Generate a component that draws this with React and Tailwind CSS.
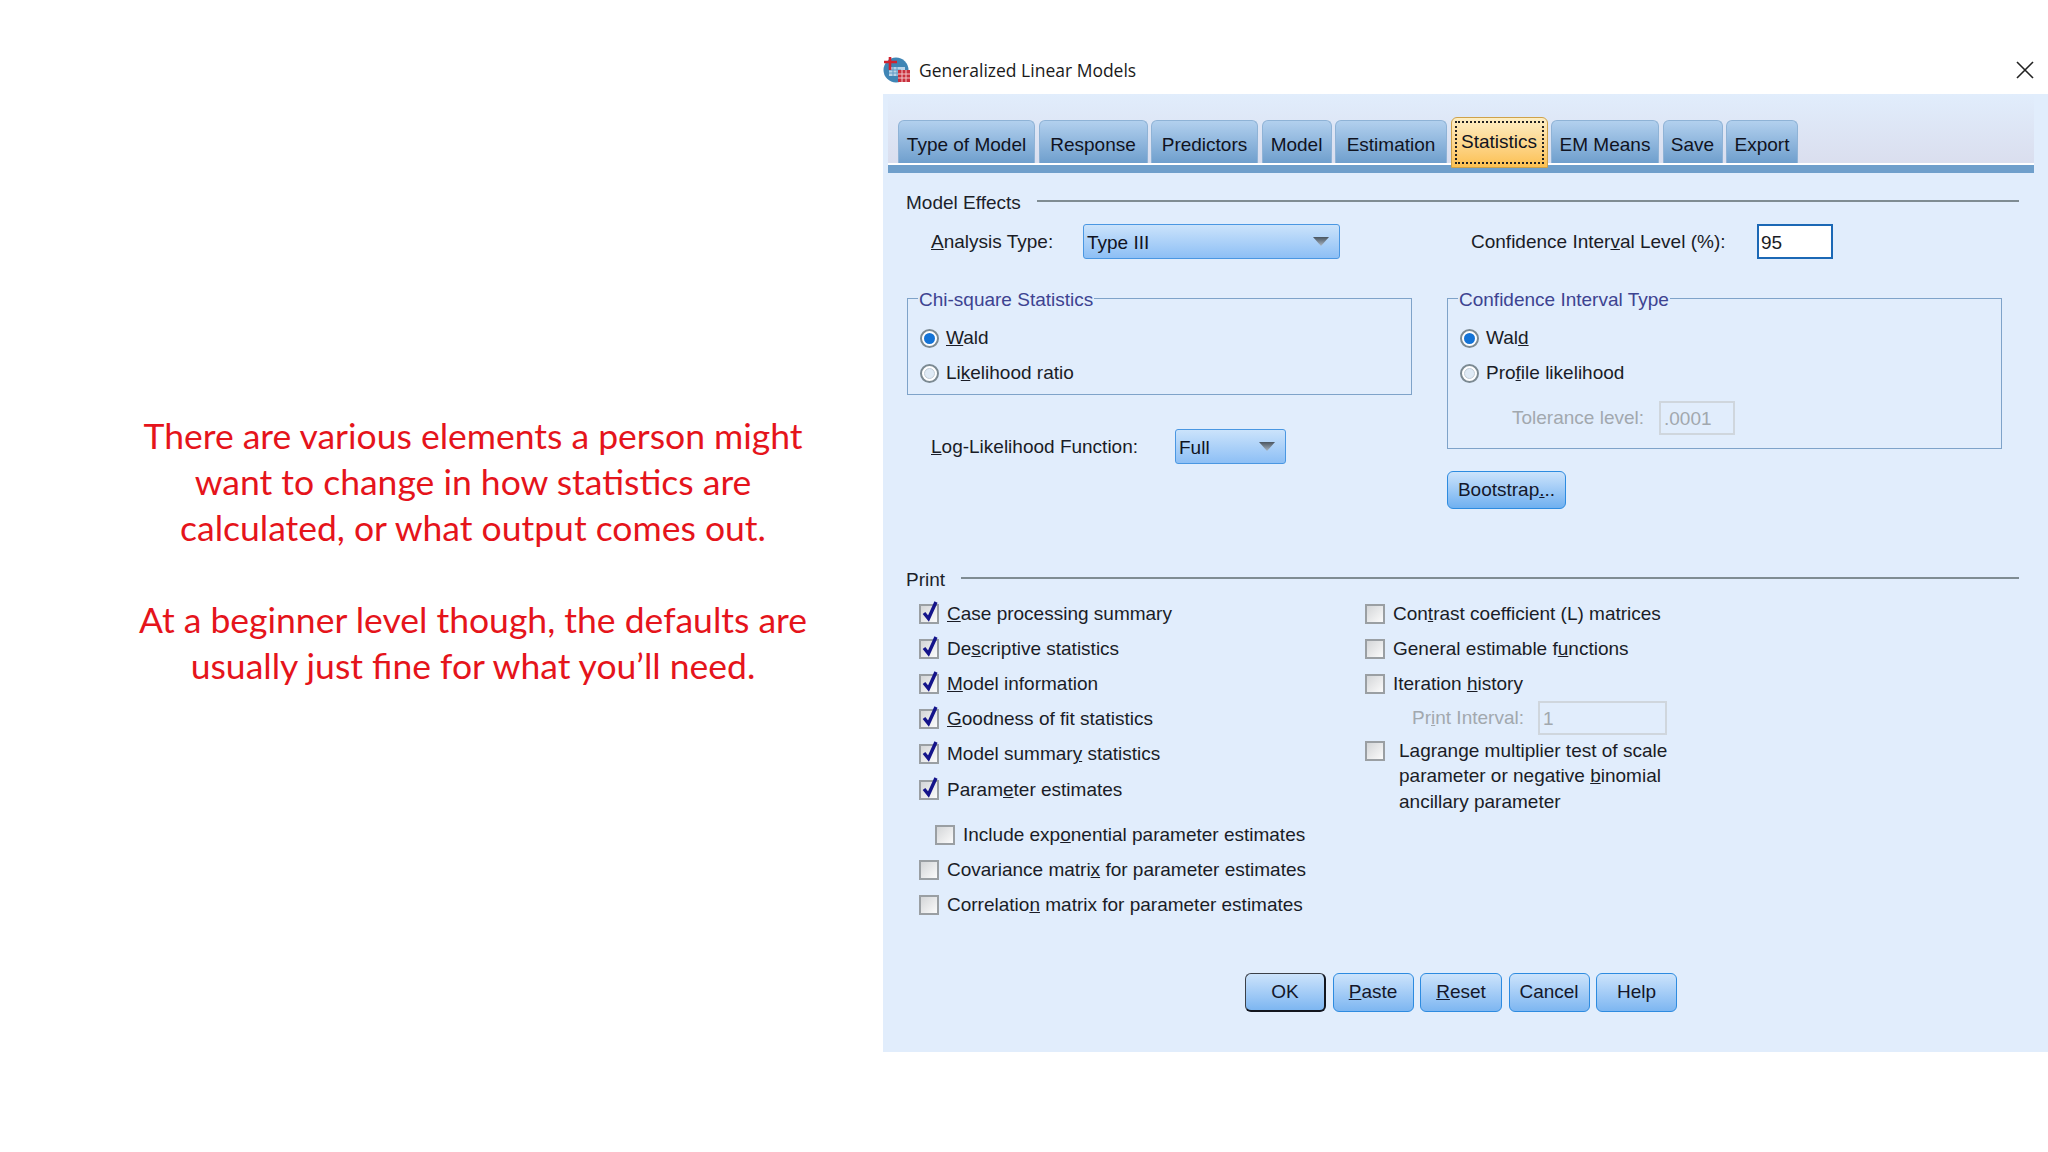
/* ── Generalized Linear Models dialog, with a slide note beside it ── */

const arial = { fontFamily: '"Liberation Sans", Arial, sans-serif' };

const tabs = [
  { name: 'Type of Model', w: 'w-[137px]' },
  { name: 'Response', w: 'w-[109px]' },
  { name: 'Predictors', w: 'w-[107px]' },
  { name: 'Model', w: 'w-[70px]' },
  { name: 'Estimation', w: 'w-[112px]' },
];
const tabsAfter = [
  { name: 'EM Means', w: 'w-[108px]' },
  { name: 'Save', w: 'w-[60px]' },
  { name: 'Export', w: 'w-[72px]' },
];

function Tab({ name, w }) {
  return (
    <div className={`${w} h-[43px] rounded-t-[6px] border border-b-0 border-[#8fb3d6] bg-gradient-to-b from-[#b2d0ee] to-[#6f9fcd] flex items-center justify-center pt-[5px] text-[#10131f]`}>
      {name}
    </div>
  );
}

function ActiveTab() {
  return (
    <div className="w-[97px] h-[51px] -mb-[5px] relative z-10 rounded-t-[6px] border border-[#cfa24a] bg-gradient-to-b from-[#fdeec4] to-[#fcc04f] p-[3px]">
      <div className="h-full border-2 border-dotted border-[#222] flex items-center justify-center pb-[2px] text-[#10131f]">
        Statistics
      </div>
    </div>
  );
}

function SectionHead({ label, className }) {
  return (
    <div className={`flex items-center ml-[23px] w-[1113px] h-[22px] ${className}`}>
      <span className="text-[#1c1f2a]">{label}</span>
      <div className="flex-1 h-[2px] bg-[#7f8c92] ml-[16px] -mt-[4px]" />
    </div>
  );
}

function Arrow() {
  return (
    <svg width="16" height="9" viewBox="0 0 16 9" className="-mt-[3px]">
      <defs>
        <linearGradient id="arrowFill" x1="0" y1="0" x2="0" y2="1">
          <stop offset="0" stopColor="#4a5560" />
          <stop offset="1" stopColor="#a9b6c4" />
        </linearGradient>
      </defs>
      <path d="M0 0H16L8 9Z" fill="url(#arrowFill)" />
    </svg>
  );
}

function Select({ value, w }) {
  return (
    <div className={`${w} h-[35px] rounded-[3px] border border-[#4a97e2] bg-gradient-to-b from-[#cbe3fb] to-[#8dbff5] flex items-center justify-between pl-[3px] pr-[10px] pt-[2px] text-[#10131f]`}>
      <span>{value}</span>
      <Arrow />
    </div>
  );
}

function Radio({ on }) {
  return (
    <div className="w-[19px] h-[19px] shrink-0 rounded-full border-2 border-[#7c8a92] bg-white flex items-center justify-center">
      <div className={`w-[11px] h-[11px] rounded-full ${on ? 'bg-[#1473d6]' : 'bg-[#dfeaf5] border border-[#c3ced8]'}`} />
    </div>
  );
}

function RadioRow({ on, gap, children, className }) {
  return (
    <div className={`flex items-center h-[24px] pl-[12px] ${gap} ${className}`}>
      <Radio on={on} />
      <span className="text-[#1a1c26]">{children}</span>
    </div>
  );
}

function Group({ title, className, children }) {
  return (
    <div className={`border border-[#7fa3c9] ${className}`}>
      <div className="w-fit -mt-[10px] ml-[10px] px-[1px] bg-[#e1edfc] h-[22px] leading-[22px] text-[#3d4391]">
        {title}
      </div>
      {children}
    </div>
  );
}

function Check({ on, className = '' }) {
  return (
    <div className={`relative w-[20px] h-[20px] shrink-0 border-2 border-[#9a9fa3] bg-gradient-to-br from-[#d4d6d8] to-[#fbfbfb] ${className}`}>
      {on && (
        <svg viewBox="0 0 20 24" className="absolute -top-[7px] -left-[1px] w-[20px] h-[24px]">
          <path d="M4 14L8.5 19.5L16 3" fill="none" stroke="#14148a" strokeWidth="3.4" />
        </svg>
      )}
    </div>
  );
}

function CheckRow({ on, className = '', children }) {
  return (
    <div className={`flex items-center gap-[8px] h-[35.2px] ${className}`}>
      <Check on={on} />
      <span className="text-[#1a1c26] whitespace-nowrap">{children}</span>
    </div>
  );
}

function Button({ w, dark, children }) {
  return (
    <div className={`${w} h-[39px] rounded-[6px] border bg-gradient-to-b from-[#cce3fb] to-[#7db6f1] flex items-center justify-center text-[#14172a] ${dark ? 'border-[#3b4048] border-r-[2px] border-b-[2px] border-r-[#12161f] border-b-[#12161f]' : 'border-[#2d8be0]'}`}>
      {children}
    </div>
  );
}

function DisabledBox({ value, w }) {
  return (
    <div className={`${w} h-[34px] border-2 border-[#cfd6dd] flex items-center pl-[3px] pt-[2px] text-[#a2a8ae]`}>
      {value}
    </div>
  );
}

function AppIcon() {
  return (
    <svg width="28" height="26" viewBox="0 0 28 26">
      <circle cx="13" cy="13" r="12.5" fill="#3f85b5" />
      <rect x="6" y="10" width="16" height="9" fill="#b9d3e8" />
      <path d="M6 13H18M6 16H18M10 10V19M14 10V19" stroke="#5f9ac4" strokeWidth="1" />
      <path d="M7 0V13M1 5H14" stroke="#d1232f" strokeWidth="2.6" />
      <rect x="15" y="13" width="12" height="12" fill="#c9303c" />
      <path d="M15 17H27M15 21H27M19 13V25M23 13V25" stroke="#f3c4c8" strokeWidth="1" />
    </svg>
  );
}

export default function App() {
  return (
    <div className="w-[2048px] h-[1152px] bg-white flex overflow-hidden">
      {/* ── Slide note ── */}
      <div
        className="w-[883px] shrink-0 pl-[63px] pt-[413px] text-center text-[#e5141b] text-[35.5px] leading-[46px]"
        style={{ fontFamily: 'Lato, sans-serif' }}
      >
        <p>There are various elements a person might</p>
        <p>want to change in how statistics are</p>
        <p>calculated, or what output comes out.</p>
        <p className="mt-[46px]">At a beginner level though, the defaults are</p>
        <p>usually just fine for what you’ll need.</p>
      </div>

      {/* ── Dialog ── */}
      <div className="flex-1 pt-[46px]">
        <div className="h-[48px] flex items-center pr-[14px]">
          <AppIcon />
          <span
            className="ml-[8px] flex-1 text-[17.5px] text-[#1a1a1a]"
            style={{ fontFamily: '"Open Sans", sans-serif' }}
          >
            Generalized Linear Models
          </span>
          <svg width="18" height="18" viewBox="0 0 18 18">
            <path d="M1 1L17 17M17 1L1 17" stroke="#222" strokeWidth="1.6" />
          </svg>
        </div>

        <div className="h-[958px] bg-[#e1edfc] text-[19px] leading-[22px]" style={arial}>
          {/* ── Tab strip ── */}
          <div className="ml-[5px] w-[1146px] pt-[23px] bg-gradient-to-b from-[#e1edfc] to-[#d9dcec]">
            <div className="flex items-end gap-[3.5px] pl-[10px] h-[46px]">
              {tabs.map((t) => <Tab key={t.name} {...t} />)}
              <ActiveTab />
              {tabsAfter.map((t) => <Tab key={t.name} {...t} />)}
            </div>
            <div className="h-[2px] bg-white" />
            <div className="h-[8px] bg-[#6f9fcb]" />
          </div>

          {/* ── Model Effects ── */}
          <SectionHead label="Model Effects" className="mt-[19px]" />
          <div className="flex items-center ml-[48px] mt-[10px] text-[#1a1c26]">
            <span className="w-[152px]"><u>A</u>nalysis Type:</span>
            <Select value="Type III" w="w-[257px]" />
            <span className="w-[286px] ml-[131px]">Confidence Inter<u>v</u>al Level (%):</span>
            <div className="w-[76px] h-[35px] border-2 border-[#1b68b5] bg-white flex items-center pl-[2px] pt-[2px]">95</div>
          </div>

          <div className="flex mt-[39px] ml-[24px]">
            <div className="w-[505px]">
              <Group title="Chi-square Statistics" className="h-[97px]">
                <RadioRow on gap="gap-[7px]" className="mt-[15px]"><u>W</u>ald</RadioRow>
                <RadioRow gap="gap-[7px]" className="mt-[11px]">Li<u>k</u>elihood ratio</RadioRow>
              </Group>
              <div className="flex items-center ml-[24px] mt-[34px] text-[#1a1c26]">
                <span className="w-[244px]"><u>L</u>og-Likelihood Function:</span>
                <Select value="Full" w="w-[111px]" />
              </div>
            </div>

            <div className="w-[555px] ml-[35px]">
              <Group title="Confidence Interval Type" className="h-[151px]">
                <RadioRow on gap="gap-[7px]" className="mt-[15px]">Wal<u>d</u></RadioRow>
                <RadioRow gap="gap-[7px]" className="mt-[11px]">Pro<u>f</u>ile likelihood</RadioRow>
                <div className="flex items-center ml-[64px] mt-[16px]">
                  <span className="w-[147px] text-[#a2a8ae]">Tolerance level:</span>
                  <DisabledBox value=".0001" w="w-[76px]" />
                </div>
              </Group>
              <div className="mt-[22px] w-[119px]">
                <div className="h-[38px] rounded-[6px] border border-[#2d8be0] bg-gradient-to-b from-[#cce3fb] to-[#6fb0f0] flex items-center justify-center text-[#14172a]">
                  Bootstrap<u>.</u>..
                </div>
              </div>
            </div>
          </div>

          {/* ── Print ── */}
          <SectionHead label="Print" className="mt-[60px]" />
          <div className="flex mt-[5px] ml-[36px]">
            <div className="w-[446px] shrink-0">
              <CheckRow on><u>C</u>ase processing summary</CheckRow>
              <CheckRow on>De<u>s</u>criptive statistics</CheckRow>
              <CheckRow on><u>M</u>odel information</CheckRow>
              <CheckRow on><u>G</u>oodness of fit statistics</CheckRow>
              <CheckRow on>Model summar<u>y</u> statistics</CheckRow>
              <CheckRow on>Param<u>e</u>ter estimates</CheckRow>
              <CheckRow className="ml-[16px] mt-[10px]">Include exp<u>o</u>nential parameter estimates</CheckRow>
              <CheckRow>Covariance matri<u>x</u> for parameter estimates</CheckRow>
              <CheckRow>Correlatio<u>n</u> matrix for parameter estimates</CheckRow>
            </div>
            <div>
              <CheckRow>Con<u>t</u>rast coefficient (L) matrices</CheckRow>
              <CheckRow>General estimable f<u>u</u>nctions</CheckRow>
              <CheckRow>Iteration <u>h</u>istory</CheckRow>
              <div className="flex items-center ml-[47px] -mt-[1px]">
                <span className="w-[126px] text-[#a2a8ae]">Pr<u>i</u>nt Interval:</span>
                <DisabledBox value="1" w="w-[129px]" />
              </div>
              <div className="flex items-start mt-[3px]">
                <Check className="mt-[3px]" />
                <p className="ml-[14px] leading-[25.5px] text-[#1a1c26]">
                  Lagrange multiplier test of scale
                  <br />
                  parameter or negative <u>b</u>inomial
                  <br />
                  ancillary parameter
                </p>
              </div>
            </div>
          </div>

          {/* ── Bottom buttons ── */}
          <div className="flex gap-[6.5px] ml-[362px] mt-[50px]">
            <Button w="w-[81px]" dark>OK</Button>
            <Button w="w-[81px]"><u>P</u>aste</Button>
            <Button w="w-[82px]"><u>R</u>eset</Button>
            <Button w="w-[81px]">Cancel</Button>
            <Button w="w-[81px]">Help</Button>
          </div>
        </div>
      </div>
    </div>
  );
}
